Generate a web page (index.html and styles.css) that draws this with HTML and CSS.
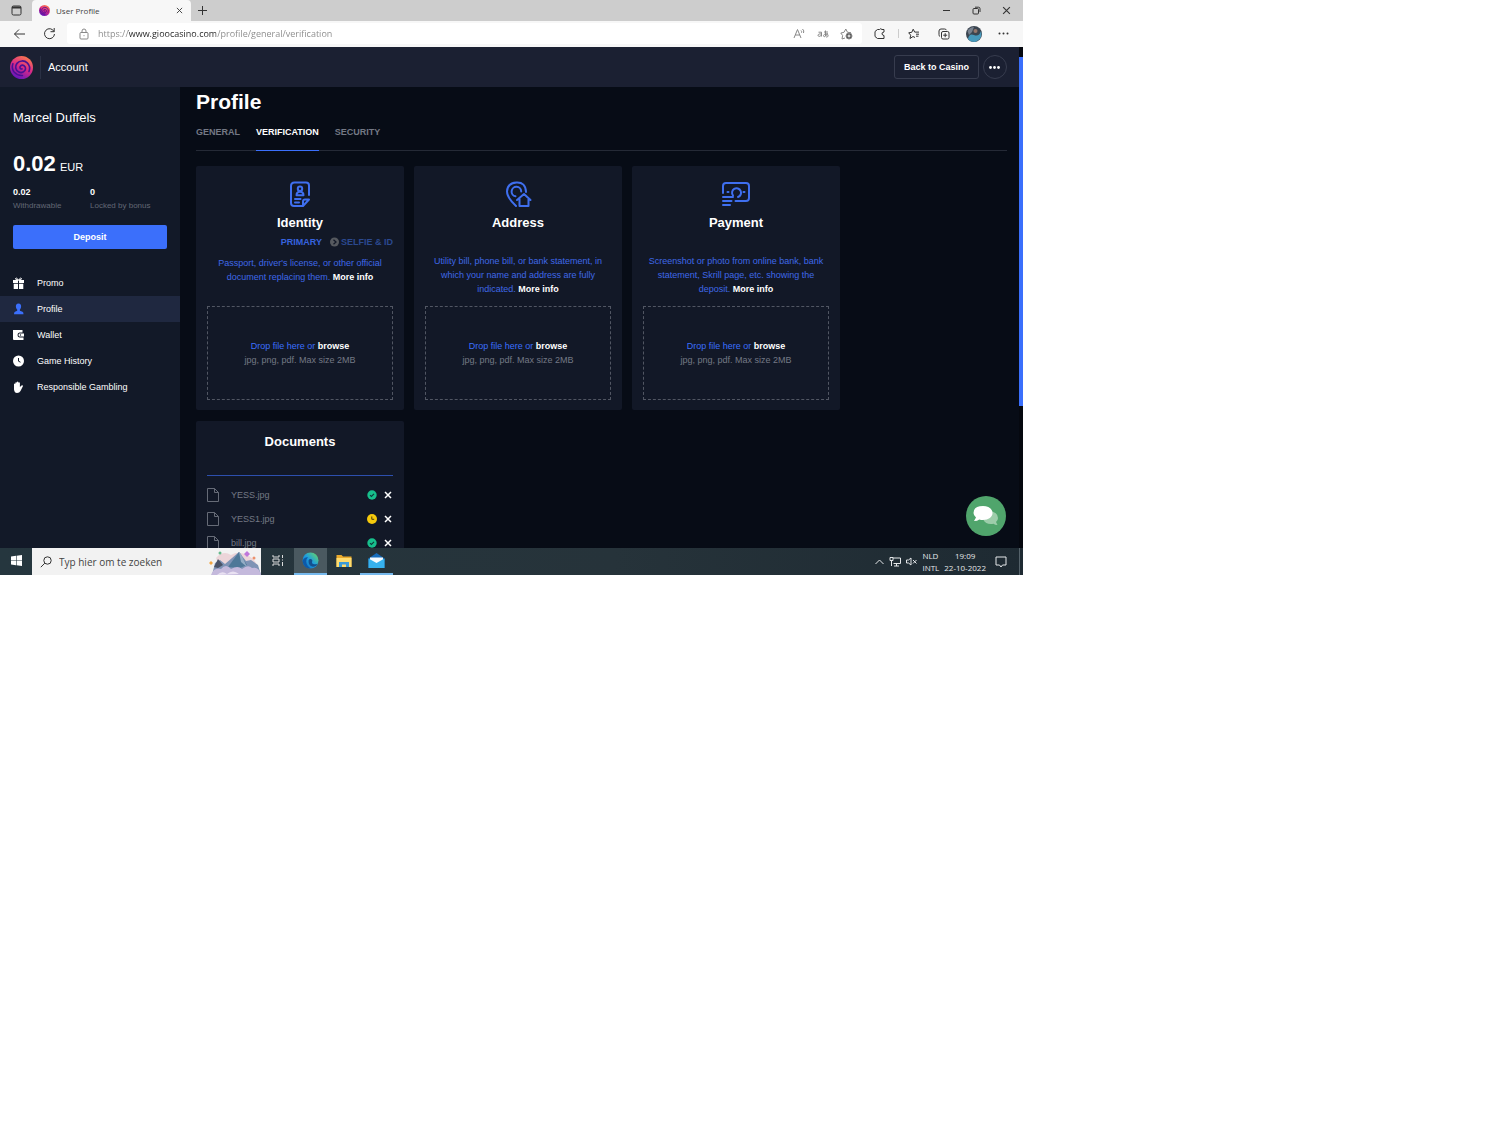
FILE: index.html
```html
<!DOCTYPE html>
<html lang="en">
<head>
<meta charset="utf-8">
<title>User Profile</title>
<link rel="stylesheet" href="styles.css">
</head>
<body>
<svg class="defs" aria-hidden="true">
  <linearGradient id="swirl-fill" x1=".8" y1="0" x2=".3" y2="1"><stop offset="0" stop-color="#ff8048"/><stop offset=".5" stop-color="#d92a86"/><stop offset="1" stop-color="#5f14c0"/></linearGradient>
  <linearGradient id="edge-fill" x1="0" y1="1" x2="1" y2="0"><stop offset="0" stop-color="#0b62b8"/><stop offset=".5" stop-color="#1f9ede"/><stop offset="1" stop-color="#6fdc5a"/></linearGradient>
  <symbol id="swirl" viewBox="0 0 24 24">
    <circle cx="12" cy="12" r="12" fill="url(#swirl-fill)"/>
    <path d="M12.500 13.500c-2 .3-3-2-1.300-3.300 2.300-1.600 5.300.3 5 3.200-.4 3.200-4 4.700-6.900 3.400C5.500 15 5 10.500 7.300 7.700 10 4.500 15 4.300 18 7.200c2.500 2.500 3 6 1.800 9" fill="none" stroke="#4a1094" stroke-width="1.700" stroke-linecap="round"/>
    <path d="M3 8q-1.800 5 1.500 9 3.500 3.800 8.500 3.300" fill="none" stroke="#4a1094" stroke-width="1.600" stroke-linecap="round"/>
  </symbol>
  <symbol id="file" viewBox="0 0 12 14"><path d="M.5.5h7l4 4v9H.5zM7.500.5v4h4"/></symbol>
  <symbol id="close" viewBox="0 0 8 8"><path d="M1 1l6 6M7 1L1 7"/></symbol>
  <symbol id="approved" viewBox="0 0 10 10"><circle cx="5" cy="5" r="4.700" fill="#17bf8c"/><path d="M3 5.200l1.400 1.300L7 3.800" fill="none" stroke="#0f3a3a" stroke-width="1.100"/></symbol>
</svg>

<div class="desktop">
  <header class="browser">
    <div class="tab-strip">
      <button class="icon-button workspace" aria-label="Tab actions"><svg class="line" width="11" height="11" viewBox="0 0 11 11"><rect x="1" y="1" width="9" height="9" rx="1.500"/><path d="M1 2.500h9M4 2v1.500" stroke-width="2"/></svg></button>
      <div class="tab">
        <svg width="11" height="11"><use href="#swirl"/></svg>
        <span class="tab-name">User Profile</span>
        <button class="icon-button tab-close" aria-label="Close tab"><svg class="line" width="7" height="7"><use href="#close"/></svg></button>
      </div>
      <button class="icon-button new-tab" aria-label="New tab"><svg class="line" width="11" height="11" viewBox="0 0 11 11"><path d="M5.500 1v9M1 5.500h9"/></svg></button>
      <div class="window-controls">
        <button class="icon-button" aria-label="Minimise"><svg class="line" width="9" height="9" viewBox="0 0 9 9"><path d="M1 4.500h7"/></svg></button>
        <button class="icon-button" aria-label="Restore"><svg class="line" width="9" height="9" viewBox="0 0 9 9"><rect x="1" y="2.500" width="5.500" height="5.500" rx="1"/><path d="M3 1.200h3.500Q8 1.200 8 2.700V6"/></svg></button>
        <button class="icon-button" aria-label="Close"><svg class="line" width="9" height="9" viewBox="0 0 8 8"><use href="#close"/></svg></button>
      </div>
    </div>
    <div class="toolbar">
      <button class="icon-button" aria-label="Back"><svg class="line" width="13" height="12" viewBox="0 0 13 12"><path d="M12 6H1.500M6 1.500L1.500 6 6 10.500"/></svg></button>
      <button class="icon-button" aria-label="Refresh"><svg class="line" width="13" height="13" viewBox="0 0 13 13"><path d="M11 4.500A5 5 0 1 0 11.500 7M11.200 1v3.700H7.500"/></svg></button>
      <div class="address">
        <svg class="line faint" width="10" height="12" viewBox="0 0 10 12"><rect x="1" y="4.500" width="8" height="6.500" rx="1"/><path d="M3 4.500V3a2 2 0 0 1 4 0v1.500M5 7.200v1"/></svg>
        <input class="url" type="text" aria-label="Address" value="https://www.gioocasino.com/profile/general/verification">
        <button class="icon-button faint" aria-label="Read aloud"><svg class="line" width="12" height="11" viewBox="0 0 12 11"><path d="M1 10l3.500-8.500L8 10M2.200 7h4.600M8 2.500q1 1 .5 2.200M9.500 1q2 1.700 1 4"/></svg></button>
        <button class="icon-button faint" aria-label="Translate"><svg class="line" width="12" height="10" viewBox="0 0 12 10"><path d="M1.500 3.200h3v4.300M4.500 5C2 4.500 1 5.500 1 6.300c0 1.500 2.500 1.500 3.500-.3M7 3h4M8.500 1.500V7M10.500 4C9 8 6.500 8.500 6.500 6.700S10.500 4 11 6 10 8 9 8"/></svg></button>
        <button class="icon-button faint" aria-label="Add to favourites"><svg class="line" width="13" height="12" viewBox="0 0 13 12"><path d="M5 10L2 11l.6-3.500L.8 5 4 4.300 5.800 1l1.700 3.300 3.500.4"/><circle cx="9" cy="8" r="3" fill="#555"/><path d="M7.500 8h3M9 6.500v3" stroke="#fff"/></svg></button>
      </div>
      <button class="icon-button extensions" aria-label="Extensions"><svg class="line" width="12" height="12" viewBox="0 0 12 12"><path d="M3.500 1.500h2Q6.500 0 8 1.500h2v2.500q-2.500.5-2 2t2 1.500V10.500H3.500L1 8.500V3.500z"/></svg></button>
      <span class="divider"></span>
      <button class="icon-button" aria-label="Favourites"><svg class="line" width="12" height="12" viewBox="0 0 12 12"><path d="M7 9.500L5 8.500 2 10.500l.7-3.300L.7 4.800 3.800 4.300 5.200 1.200l1.500 2.900H11M8 6.200h3M8 8.200h2.500"/></svg></button>
      <button class="icon-button" aria-label="Collections"><svg class="line" width="12" height="12" viewBox="0 0 12 12"><rect x="3.500" y="3.500" width="7.500" height="7.500" rx="1.500"/><path d="M2 8.500Q.8 8 1 6.500V3Q1 1 3 1h3.500Q8 1 8.500 2.200M7.200 5.200v4M5.200 7.200h4"/></svg></button>
      <button class="icon-button" aria-label="Account"><svg width="16" height="16" viewBox="0 0 16 16"><circle cx="8" cy="8" r="8" fill="#3b4550"/><path d="M2 13Q3 7 8 9t7-4Q17 13 9 16 4 16 2 13z" fill="#4799bb"/><path d="M1.500 5Q4 1 8 1L6 6 3 9z" fill="#77818e"/><circle cx="9.500" cy="5" r="2" fill="#96776b"/></svg></button>
      <button class="icon-button" aria-label="Settings and more"><svg width="11" height="3" viewBox="0 0 11 3" fill="#333"><circle cx="1.500" cy="1.500" r="1"/><circle cx="5.500" cy="1.500" r="1"/><circle cx="9.500" cy="1.500" r="1"/></svg></button>
    </div>
  </header>

  <div class="page">
    <div class="app">
      <header class="app-header">
        <a class="logo" href="#" aria-label="Home"><svg width="23" height="23"><use href="#swirl"/></svg></a>
        <span class="section-name">Account</span>
        <button class="back">Back to Casino</button>
        <button class="more" aria-label="More"><svg width="11" height="3" viewBox="0 0 11 3" fill="#fff"><circle cx="1.500" cy="1.500" r="1.400"/><circle cx="5.500" cy="1.500" r="1.400"/><circle cx="9.500" cy="1.500" r="1.400"/></svg></button>
      </header>

      <div class="columns">
        <aside class="sidebar">
          <div class="wallet">
            <div class="user">Marcel Duffels</div>
            <div class="balance"><strong>0.02</strong> EUR</div>
            <dl class="stats">
              <div><dt>Withdrawable</dt><dd>0.02</dd></div>
              <div><dt>Locked by bonus</dt><dd>0</dd></div>
            </dl>
            <button class="deposit">Deposit</button>
          </div>
          <nav class="menu">
            <a href="#"><svg width="11" height="12" viewBox="0 0 11 12" fill="#fff"><path d="M0 3h5v3H0zM6 3h5v3H6zM.7 6.800H5V12H.7zM6 6.800h4.300V12H6z"/><path d="M5.500 3Q2 3 2.500 1.500T5.500 3Q8 0 8.500 1.500T5.500 3z" fill="none" stroke="#fff"/></svg>Promo</a>
            <a href="#" class="active" aria-current="page"><svg width="11" height="12" viewBox="0 0 11 12" fill="#3b6ffb"><path d="M5.500.5c2 0 2.800 1.400 2.600 3.200C8 5 7.300 6 6.900 6.600v1.200l2.600 1q1 .5 1 2.400H1q0-1.900 1-2.400l2.200-1V6.600C3.700 6 3 5 2.900 3.700 2.700 1.900 3.500.5 5.500.5z"/></svg>Profile</a>
            <a href="#"><svg width="11" height="12" viewBox="0 0 11 12" fill="#fff"><path d="M0 1h9.500v2.500H6.500Q4.500 3.700 4.500 6t2 2.500h4V11H1Q0 11 0 10z"/><path d="M6.500 4.500H11v3H6.500Q5.500 7.300 5.500 6t1-1.500z"/><circle cx="7.500" cy="6" r=".7" fill="#121928"/></svg>Wallet</a>
            <a href="#"><svg width="11" height="12" viewBox="0 0 11 12"><circle cx="5.500" cy="6" r="5.500" fill="#fff"/><path d="M5.500 3v3.200l2 1" fill="none" stroke="#121928"/></svg>Game History</a>
            <a href="#"><svg width="11" height="12" viewBox="0 0 11 12" fill="#fff"><path d="M1 3q.7-.8 1.300 0V1.700q.8-1 1.500 0V1q.8-1.200 1.600 0v.7q1-.8 1.500.3v4L8.500 4.500q1.300-.6 1.500.5L7.500 10Q6.500 12 4 12T1 8.500z"/></svg>Responsible Gambling</a>
          </nav>
        </aside>

        <main class="content">
          <h1>Profile</h1>
          <nav class="tabs">
            <a href="#">GENERAL</a>
            <a href="#" class="active" aria-current="page">VERIFICATION</a>
            <a href="#">SECURITY</a>
          </nav>
          <div class="cards">
            <section class="card">
              <svg class="card-icon" width="28" height="28" viewBox="0 0 28 28"><path d="M23 15V5.500Q23 2.500 20 2.500H8.500Q5 2.500 5 6v17q0 3 3 3h8.500M23 19.500h-4q-2 0-2 2V26zM9 19h5.500M9 22.500h4"/><circle cx="14" cy="8.700" r="2.200"/><path d="M10.500 15.300q0-3.600 3.500-3.600t3.500 3.600z"/></svg>
              <h2>Identity</h2>
              <div class="steps"><a href="#">PRIMARY</a><svg width="9" height="10" viewBox="0 0 9 10"><circle cx="4.500" cy="5" r="4.500" fill="#56595f"/><path d="M3.500 2.700L6 5 3.500 7.300" fill="none" stroke="#121827" stroke-width="1.300"/></svg><a href="#" class="next">SELFIE &amp; ID</a></div>
              <p class="after-steps">Passport, driver's license, or other official document replacing them. <a href="#">More info</a></p>
              <label class="drop"><input type="file"><span>Drop file here or <b>browse</b></span><small>jpg, png, pdf. Max size 2MB</small></label>
            </section>
            <section class="card">
              <svg class="card-icon" width="28" height="28" viewBox="0 0 28 28"><path d="M12 26Q3 17.500 3 11.500 3.500 3 12.500 2.500T22 12"/><path d="M11.500 16.300A4.800 4.800 0 1 1 17.200 11.500"/><path d="M13 20l7-6 6.500 6M15.500 19v7h9v-7"/></svg>
              <h2>Address</h2>
              <p>Utility bill, phone bill, or bank statement, in which your name and address are fully indicated. <a href="#">More info</a></p>
              <label class="drop"><input type="file"><span>Drop file here or <b>browse</b></span><small>jpg, png, pdf. Max size 2MB</small></label>
            </section>
            <section class="card">
              <svg class="card-icon" width="28" height="28" viewBox="0 0 28 28"><path d="M1 13V6Q1 3 4 3h20q3 0 3 3v12q0 3-3 3H13.500M1 17h10M1 21h8.500M1 25h7M11 15.500a4.500 4.500 0 1 1 5 1.500M5.500 12h1M21.500 12h1"/></svg>
              <h2>Payment</h2>
              <p>Screenshot or photo from online bank, bank statement, Skrill page, etc. showing the deposit. <a href="#">More info</a></p>
              <label class="drop"><input type="file"><span>Drop file here or <b>browse</b></span><small>jpg, png, pdf. Max size 2MB</small></label>
            </section>
            <section class="card documents">
              <h2>Documents</h2>
              <ul>
                <li><svg class="file" width="12" height="14"><use href="#file"/></svg><span>YESS.jpg</span><svg width="10" height="10"><use href="#approved"/></svg><button class="icon-button" aria-label="Remove YESS.jpg"><svg class="line" width="8" height="8"><use href="#close"/></svg></button></li>
                <li><svg class="file" width="12" height="14"><use href="#file"/></svg><span>YESS1.jpg</span><svg width="10" height="10" viewBox="0 0 10 10"><circle cx="5" cy="5" r="5" fill="#f5c90c"/><path d="M4.800 2.500v2.800h2.400" fill="none" stroke="#4c3d0b"/></svg><button class="icon-button" aria-label="Remove YESS1.jpg"><svg class="line" width="8" height="8"><use href="#close"/></svg></button></li>
                <li><svg class="file" width="12" height="14"><use href="#file"/></svg><span>bill.jpg</span><svg width="10" height="10"><use href="#approved"/></svg><button class="icon-button" aria-label="Remove bill.jpg"><svg class="line" width="8" height="8"><use href="#close"/></svg></button></li>
              </ul>
            </section>
          </div>
        </main>
      </div>
      <button class="chat" aria-label="Chat"><svg width="26" height="22" viewBox="0 0 26 22"><path d="M16 6q9 1 9 7 0 2.500-2 4l1.500 3q-2.500 0-4-1.200Q13 20 10.500 15z" fill="#9dcdaa"/><path d="M10 1c5.500 0 9.500 3 9.500 7s-4 7-9.500 7q-2 0-3.700-.6Q4.500 16 1 16l2-3.500Q.5 10.500.5 8 .5 1 10 1z" fill="#fff"/></svg></button>
    </div>
    <div class="scroll-track"><div class="scroll-thumb"></div></div>
  </div>

  <footer class="taskbar">
    <button class="task start" aria-label="Start"><svg width="11" height="11" viewBox="0 0 11 11" fill="#fff"><path d="M0 1.500L5 .8V5.200H0zM5.600.7L11 0v5.200H5.600zM0 5.800h5v4.400l-5-.7zM5.600 5.800H11V11l-5.400-.7z"/></svg></button>
    <div class="search">
      <svg class="line" width="12" height="12" viewBox="0 0 12 12"><circle cx="7.500" cy="4.500" r="3.700"/><path d="M4.800 7.200L.8 11.200"/></svg>
      <input type="search" placeholder="Typ hier om te zoeken" aria-label="Typ hier om te zoeken">
      <svg width="52" height="26" viewBox="0 0 52 26"><path d="M7 9q7-8 15-3 10-6 22 4 6 6 3 10L12 22z" fill="#ecd5d9"/><path d="M3 26l3-12 5-3 5 4 14-12 7 9 5-1 7 5 3 10z" fill="#7e93b5"/><path d="M19 18L30 3l8 13-7 3z" fill="#4e7898"/><path d="M30 3l2 10 6 5-6-13z" fill="#93adc5"/><path d="M5 18l4-8 5 6-5 3z" fill="#4a5367"/><path d="M2 26q3-8 10-6 5-6 10 0 7-4 11 0 6-5 10-1 7-2 9 7z" fill="#c4b9dc"/><path d="M8 26q5-5 10-1 6-5 12 0z" fill="#e9e1f2"/><circle cx="11" cy="4" r="1.500" fill="#65b98b"/><path d="M0 14l2-2 2 2-2 2z" fill="#f1a746"/><path d="M35 5l3-3 3 3-3 3z" fill="#bf77db"/><circle cx="45" cy="9" r="1.500" fill="#ec926d"/></svg>
    </div>
    <button class="task" aria-label="Task view"><svg width="12" height="11" viewBox="0 0 12 11" fill="none" stroke="#ddd"><path d="M1 0v2h6V0M1 11V9h6v2M1 4h6v3H1zM10.500 0v3M10.500 7v4M10 5h1"/></svg></button>
    <button class="task open focused" aria-label="Microsoft Edge"><svg width="17" height="17" viewBox="0 0 17 17"><circle cx="8.500" cy="8.500" r="8" fill="url(#edge-fill)"/><path d="M.6 9Q2 5 6 5.300q-2 1.700-1.800 4.500.4 4.200 4.500 6.600Q1.500 16.500.6 9z" fill="#0d59a8"/><path d="M6.500 8.500q1-2 3-1.200 1.500 1 .5 3-.5 1.500 2 2 2.200.3 3.800-.8-1.500 3.500-5 3.300-4.500-.8-4.300-6.300z" fill="#14508f"/></svg></button>
    <button class="task" aria-label="File Explorer"><svg width="16" height="14" viewBox="0 0 16 14"><path d="M.5 1h5l1.500 1.500h8.500V13H.5z" fill="#e9aa2c"/><path d="M.5 4h15v9H.5z" fill="#ffdc6e"/><path d="M3 13V8h10v5h-3v-2.500H6V13z" fill="#3d9bd8"/></svg></button>
    <button class="task open" aria-label="Mail"><svg width="17" height="15" viewBox="0 0 17 15"><path d="M.5 5.500L8.500 0l8 5.500V15H.5z" fill="#176dbb"/><path d="M2 4.500h13V11H2z" fill="#f4fbff"/><path d="M.5 5.500l8 4.500 8-4.500V15H.5z" fill="#36b1ee"/></svg></button>
    <div class="tray">
      <button class="icon-button" aria-label="Show hidden icons"><svg class="line" width="9" height="6" viewBox="0 0 9 6"><path d="M.5 5l4-4 4 4"/></svg></button>
      <button class="icon-button" aria-label="Network"><svg class="line" width="12" height="11" viewBox="0 0 12 11"><path d="M4 2h7.500v5.500H4.500M2.500 5v5M5 10h5M7.500 7.500V10M1 1.500h3v3H1z"/></svg></button>
      <button class="icon-button" aria-label="Volume"><svg class="line" width="11" height="9" viewBox="0 0 11 9"><path d="M.5 3h2L5 1v7L2.500 6h-2zM7 3l3.500 3.500M10.500 3L7 6.500"/></svg></button>
      <div class="lines"><span>NLD</span><span>INTL</span></div>
      <time class="lines" datetime="2022-10-22T19:09"><span>19:09</span><span>22-10-2022</span></time>
      <button class="icon-button notices" aria-label="Notifications"><svg class="line" width="12" height="12" viewBox="0 0 12 12"><path d="M1 1h10v8H7.500L6 11 4.500 9H1z"/></svg></button>
      <span class="show-desktop"></span>
    </div>
  </footer>
</div>
</body>
</html>
```
FILE: styles.css
```css
* { box-sizing: border-box; }
body { margin: 0; background: #fff; font: 9px/14px "Liberation Sans", Arial, sans-serif; }
button, input { font: inherit; color: inherit; border: 0; padding: 0; background: none; }
a { color: inherit; text-decoration: none; }
h1, h2, p, ul, dl, dd { margin: 0; padding: 0; }
ul { list-style: none; }
svg { display: block; flex: none; }
.defs { position: absolute; width: 0; height: 0; }
.line { fill: none; stroke: currentColor; stroke-width: 1; }

.desktop {
  display: flex;
  flex-direction: column;
  width: 68.2%;
  aspect-ratio: 16 / 9;
  overflow: hidden;
}
.icon-button { display: flex; align-items: center; justify-content: center; width: 30px; flex: none; }

/* Browser frame */
.browser { color: #333; font-family: "Open Sans", "Noto Sans", sans-serif; }
.tab-strip { display: flex; height: 21px; background: #cdcdcd; }
.workspace { width: 32px; }
.tab { display: flex; align-items: center; width: 159px; padding-left: 7px; background: #f7f7f7; border-radius: 4px 4px 0 0; }
.tab-name { flex: 1; margin-left: 6px; font-size: 8px; color: #444; }
.tab-close, .new-tab { width: 23px; }
.window-controls { display: flex; margin-left: auto; padding-right: 1px; }
.toolbar { display: flex; align-items: stretch; height: 26px; padding: 2px 4px 3px; background: #f7f7f7; }
.address { display: flex; flex: 1; align-items: center; margin-left: 3px; padding: 0 3px 0 12px; background: #fff; border-radius: 3px; }
.address .icon-button { width: 24px; }
.faint { color: #888; }
.url {
  flex: 1;
  min-width: 0;
  margin-left: 9px;
  font-size: 9px;
  color: transparent;
  background: linear-gradient(90deg, #888 30px, #222 30px, #222 118px, #888 118px);
  background-clip: text;
  -webkit-background-clip: text;
}
.extensions { width: 36px; }
.divider { width: 1px; margin: 6px 0; background: #ccc; }

/* Casino account page */
.page { display: flex; flex: 1; min-height: 0; background: #070c16; color: #fff; }
.app { position: relative; display: flex; flex: 1; flex-direction: column; min-width: 0; }
.app-header { display: flex; align-items: center; height: 40px; flex: none; padding: 0 12px 0 10px; background: #1b2032; }
.logo { padding-right: 7px; border-right: 1px solid #2a3044; }
.section-name { margin-left: 7px; font-size: 11px; }
.back { height: 24px; width: 85px; margin-left: auto; border: 1px solid #373c4e; border-radius: 3px; font-weight: bold; }
.more { display: flex; align-items: center; justify-content: center; width: 24px; height: 24px; margin-left: 4px; border: 1px solid #373c4e; border-radius: 50%; }
.columns { display: flex; flex: 1; min-height: 0; overflow: hidden; }
.scroll-track { width: 4px; padding-top: 10px; background: #05080f; }
.scroll-thumb { height: 71%; background: #3b6ffb; }

.sidebar { width: 180px; flex: none; padding-top: 23px; background: #121928; }
.wallet { padding: 0 13px; }
.user { font-size: 13px; line-height: 16px; }
.balance { margin-top: 25px; font-size: 11px; line-height: 26px; }
.balance strong { margin-right: 1px; font-size: 22px; }
.stats { display: grid; grid-template-columns: 1fr 1fr; margin-top: 6px; line-height: 13px; }
.stats div { display: flex; flex-direction: column-reverse; }
.stats dt { font-size: 8px; color: #626875; white-space: nowrap; }
.stats dd { font-weight: bold; }
.deposit { width: 100%; height: 24px; margin-top: 13px; border-radius: 2px; background: #3b6ffb; font-weight: bold; }
.menu { margin-top: 21px; }
.menu a { display: flex; align-items: center; gap: 13px; height: 26px; padding-left: 13px; }
.menu .active { background: #1f2840; }

.content { flex: 1; min-width: 0; padding: 3px 12px 0 16px; }
h1 { font-size: 21px; line-height: 24px; }
.tabs { display: flex; gap: 16px; margin: 12px 0 15px; border-bottom: 1px solid #252a36; font-weight: bold; line-height: 12px; color: #747985; }
.tabs a { margin-bottom: -1px; padding-bottom: 12px; border-bottom: 1px solid transparent; }
.tabs .active { color: #fff; border-color: #3b6ffb; }
.cards { display: grid; grid-template-columns: repeat(auto-fill, 208px); gap: 11px 10px; }
.card { display: flex; flex-direction: column; min-height: 244px; padding: 14px 11px 10px; background: #121827; border-radius: 2px; text-align: center; }
.card-icon { align-self: center; fill: none; stroke: #3f6fef; stroke-width: 2; stroke-linecap: round; stroke-linejoin: round; }
h2 { margin-top: 7px; font-size: 13px; line-height: 16px; }
.card p { margin-top: 23px; color: #3f68e8; }
.card .after-steps { margin-top: 8px; }
.card p a { color: #fff; font-weight: bold; }
.steps { display: flex; align-items: center; justify-content: flex-end; margin-top: 5px; line-height: 12px; font-weight: bold; color: #3763df; }
.steps svg { margin: 0 2px 0 8px; }
.steps .next { color: #2b498f; }
.drop { display: flex; flex-direction: column; justify-content: center; height: 94px; margin-top: auto; border: 1px dashed #515663; color: #3b6ffb; }
.drop input { position: absolute; width: 1px; height: 1px; opacity: 0; }
.drop b { color: #fff; }
.drop small { font-size: 9px; color: #747985; }
.documents { padding-top: 13px; }
.documents h2 { margin: 0 0 25px; }
.documents ul { padding-top: 7px; border-top: 1px solid #2d4fae; }
.documents li { display: flex; align-items: center; height: 24px; }
.documents span { flex: 1; margin-left: 12px; color: #747985; text-align: left; }
.documents .icon-button { width: 10px; margin-left: 6px; }
.documents .icon-button .line { stroke-width: 1.5; }
.file { fill: none; stroke: #666b77; }
.chat { position: absolute; right: 13px; bottom: 12px; display: flex; align-items: center; justify-content: center; width: 40px; height: 40px; border-radius: 50%; background: #50a56c; }

/* Windows taskbar */
.taskbar { display: flex; height: 27px; flex: none; background: linear-gradient(90deg, #25363e, #26333a 60%, #1e2a32); font-family: "Open Sans", "Noto Sans", sans-serif; color: #fff; }
.task { display: flex; align-items: center; justify-content: center; width: 33px; border-bottom: 2px solid transparent; }
.start { width: 32px; }
.open { border-color: #76b9ed; }
.focused { background: #4a5960; }
.search { display: flex; align-items: center; width: 229px; padding-left: 8px; background: #f2f2f2; color: #333; }
.search input { flex: 1; min-width: 0; margin-left: 7px; font-size: 10px; }
.search input::placeholder { color: #444; opacity: 1; }
.tray { display: flex; align-items: stretch; margin-left: auto; color: #e4e7e9; }
.tray .icon-button { width: 16px; }
.lines { display: flex; flex-direction: column; justify-content: center; margin-left: 3px; font-size: 8px; line-height: 12px; }
time.lines { margin-left: 5px; text-align: center; }
.tray .notices { width: 31px; margin-right: 2px; }
.show-desktop { width: 4px; border-left: 1px solid #55626a; }
```
